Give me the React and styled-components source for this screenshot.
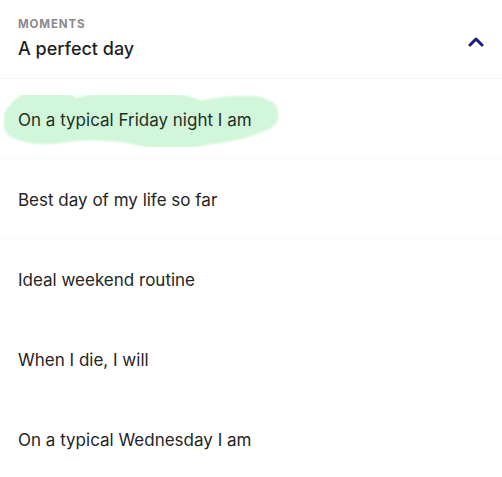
import React from 'react';
import styled, { createGlobalStyle } from 'styled-components';

const Global = createGlobalStyle`
  html, body { margin:0; padding:0; background:#fff; }
  body { font-family: Inter, "Liberation Sans", Arial, sans-serif; -webkit-font-smoothing:antialiased; }
`;

const Panel = styled.section`
  width:502px; background:#fff; overflow:hidden;
`;

const Header = styled.header`
  display:flex; align-items:flex-start; justify-content:space-between;
  height:79px; box-sizing:border-box; padding:16px 14px 0 18px;
  border-bottom:1px solid #f6f6f6;
`;

const Titles = styled.div`
  display:flex; flex-direction:column; gap:5px;
`;

const Eyebrow = styled.div`
  font-size:11.5px; font-weight:700; letter-spacing:0.9px; color:#8a8a8e; text-transform:uppercase; line-height:16px;
`;

const Title = styled.h2`
  margin:0; font-size:18px; font-weight:500; color:#1f1f1f; line-height:24px;
`;

const Toggle = styled.button`
  border:0; background:none; padding:0; margin-top:15px; width:24px; height:20px;
  display:flex; align-items:center; justify-content:center; cursor:pointer;
`;

const List = styled.ul`
  list-style:none; margin:0; padding:0;
`;

const Row = styled.li`
  position:relative; height:80px; box-sizing:border-box; display:flex; align-items:center; padding:2px 18px 0;
  border-bottom:1px solid ${p => p.$line ? '#f8f8f8' : 'transparent'};
  font-size:17px; color:#242424;
`;

const Label = styled.span`
  position:relative; z-index:1; color:${p => p.$marked ? '#1d3026' : '#242424'};
`;

const Marker = styled.svg`
  position:absolute; left:0; top:4px; z-index:0; pointer-events:none; overflow:visible;
`;

const Chevron = () => (
  <svg width="16" height="11" viewBox="0 0 16 11" fill="none">
    <path d="M2 9l6-6 6 6" stroke="#1b1a86" strokeWidth="3" strokeLinecap="round" strokeLinejoin="round" />
  </svg>
);

const Scribble = () => (
  <Marker width="290" height="76" viewBox="0 0 290 76">
    <defs>
      <filter id="soft" x="-10%" y="-20%" width="120%" height="140%"><feGaussianBlur stdDeviation="1.3" /></filter>
    </defs>
    <g stroke="#d1f6d9" strokeWidth="28" strokeLinecap="round" strokeLinejoin="round" fill="none" filter="url(#soft)">
      <path d="M18 34 Q28 20 45 20 Q62 20 75 31 Q95 22 115 26 Q138 18 160 22 Q180 24 200 32 Q228 26 255 27 L264 30" />
      <path d="M18 42 Q38 50 60 46 Q85 42 110 44 Q140 46 165 56 Q192 50 220 46 Q246 42 264 33" />
      <path d="M30 38 L250 34" />
    </g>
  </Marker>
);

const items = [
  'On a typical Friday night I am',
  'Best day of my life so far',
  'Ideal weekend routine',
  'When I die, I will',
  'On a typical Wednesday I am',
];

export default function App() {
  return (
    <Panel>
      <Global />
      <Header>
        <Titles>
          <Eyebrow>Moments</Eyebrow>
          <Title>A perfect day</Title>
        </Titles>
        <Toggle aria-label="Collapse"><Chevron /></Toggle>
      </Header>
      <List>
        {items.map((t, i) => (
          <Row key={t} $line={i < 2}>
            {i === 0 && <Scribble />}
            <Label $marked={i === 0}>{t}</Label>
          </Row>
        ))}
      </List>
    </Panel>
  );
}
